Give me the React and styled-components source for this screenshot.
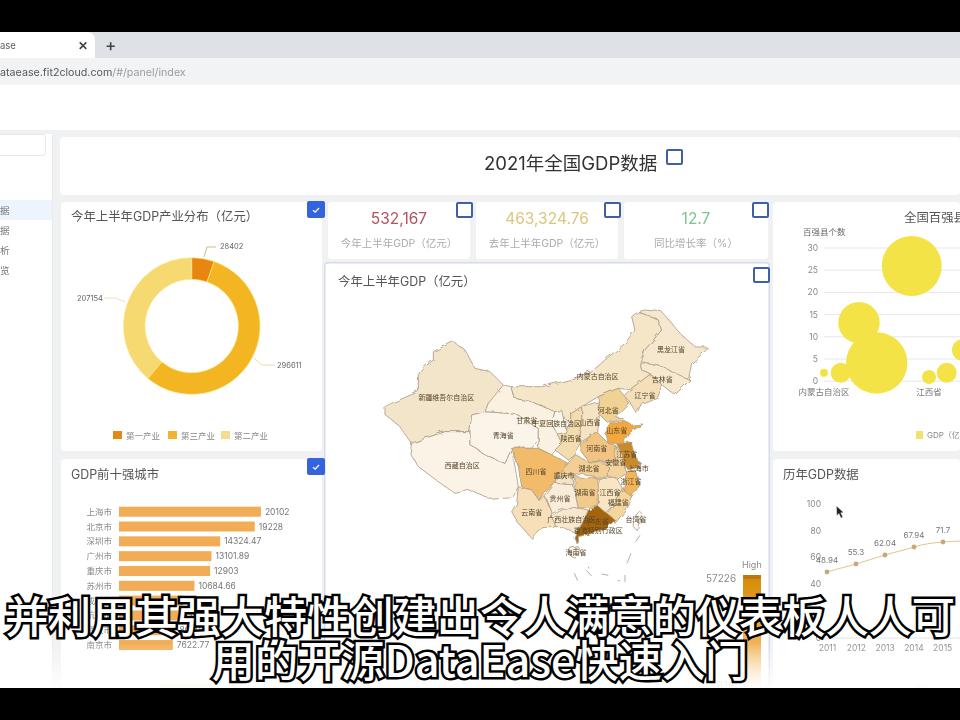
import React from "react";
import styled, { createGlobalStyle } from "styled-components";

const FONT = `"Inter", "Noto Sans CJK SC", "Noto Sans", sans-serif`;

const Global = createGlobalStyle`
  html, body { margin: 0; padding: 0; background: #000; }
  body { font-family: ${FONT}; }
`;

const Stage = styled.div`
  position: relative;
  width: 960px;
  height: 720px;
  overflow: hidden;
  background: #000;
`;
const Blackout = styled.div`
  height: 32px;
  background: #000;
`;
const Screen = styled.div`
  display: flex;
  flex-direction: column;
  height: 656px;
  background: #fff;
  filter: blur(0.45px);
  position: relative;
  overflow: hidden;
`;
const TabBar = styled.div`
  display: flex;
  align-items: center;
  height: 26px;
  background: #dee1e5;
`;
const Tab = styled.div`
  display: flex;
  align-items: center;
  justify-content: space-between;
  width: 95px;
  height: 100%;
  box-sizing: border-box;
  padding-right: 7px;
  background: #fff;
  border-radius: 0 8px 0 0;
  font-size: 9.5px;
  color: #5f6368;
`;
const TabClose = styled.span`
  font-size: 12px;
  font-weight: 600;
  color: #444;
`;
const NewTab = styled.span`
  margin-left: 10px;
  font-size: 17px;
  font-weight: 500;
  color: #444;
`;
const UrlBar = styled.div`
  display: flex;
  align-items: center;
  height: 27px;
  margin-bottom: 1px;
  padding-top: 1px;
  box-sizing: border-box;
  background: #f1f3f4;
  font-size: 10.7px;
  color: #55585c;
  white-space: nowrap;
`;
const UrlTail = styled.span`
  color: #9a9da1;
`;
const WhiteStrip = styled.div`
  height: 44px;
  background: #fff;
`;
const Body = styled.div`
  display: flex;
  height: 558px;
  background: #f0f1f3;
`;
const Sidebar = styled.aside`
  width: 53px;
  flex: none;
  margin-top: 4px;
  background: #fff;
  border-right: 1px solid #e9ebee;
  box-sizing: border-box;
`;
const SearchBox = styled.div`
  width: 50px;
  height: 22px;
  margin: 0 0 44px -4px;
  border: 1px solid #e5e7eb;
  border-radius: 3px;
  box-sizing: border-box;
`;
const NavItem = styled.div`
  display: flex;
  align-items: center;
  height: 20px;
  padding-left: 0;
  font-size: 9.5px;
  color: #777;
  background: ${(p) => (p.$active ? "#edf4fd" : "transparent")};
`;
const Main = styled.main`
  flex: 1;
  min-width: 0;
  padding: 7px 0 0 7px;
  overflow: hidden;
`;
const HeaderCard = styled.header`
  position: relative;
  display: flex;
  align-items: center;
  height: 58px;
  box-sizing: border-box;
  margin: 0 0 7px 0;
  padding: 0 0 8px 424px;
  background: #fff;
  border-radius: 4px;
`;
const PageTitle = styled.h1`
  margin: 0;
  font-size: 18.5px;
  font-weight: 400;
  color: #333;
  white-space: nowrap;
`;
const Grid = styled.div`
  display: grid;
  grid-template-columns: 261px 446px 187px;
  column-gap: 2px;
  margin-left: 1px;
`;
const Column = styled.div`
  display: flex;
  flex-direction: column;
  gap: 8px;
  height: 486px;
`;
const CenterColumn = styled.div`
  display: flex;
  flex-direction: column;
  gap: 3px;
  height: 486px;
`;
const RightColumn = styled(Column)`
  margin-left: 1px;
  width: 187px;
`;
const Card = styled.section`
  position: relative;
  flex: none;
  height: ${(p) => p.$h}px;
  background: #fff;
  border-radius: 4px;
`;
const CardTitle = styled.div`
  height: ${(p) => p.$h || 30}px;
  line-height: ${(p) => p.$lh || 30}px;
  padding-left: ${(p) => p.$pad || 10}px;
  font-size: 12.4px;
  color: #555;
  white-space: nowrap;
`;
const KpiRow = styled.div`
  display: grid;
  grid-template-columns: 142px 142px 144px;
  column-gap: 6px;
  padding-left: 4px;
  height: 57px;
`;
const Kpi = styled.div`
  position: relative;
  display: flex;
  flex-direction: column;
  align-items: center;
  padding-top: 7px;
  background: #fff;
  border-radius: 3px;
`;
const KpiValue = styled.div`
  font-size: 15.5px;
  line-height: 20px;
  color: ${(p) => p.$color};
`;
const KpiLabel = styled.div`
  margin-top: 8px;
  font-size: 10.5px;
  line-height: 14px;
  color: #a9abaf;
  white-space: nowrap;
`;
const MapCard = styled(Card)`
  box-sizing: border-box;
  box-shadow: inset 0 0 0 1.5px #d6daea;
`;
const Check = styled.span`
  position: absolute;
  z-index: 3;
  top: ${(p) => p.$top}px;
  right: ${(p) => p.$right}px;
  left: ${(p) => p.$left};
  box-sizing: border-box;
  display: flex;
  align-items: center;
  justify-content: center;
  width: ${(p) => (p.$on ? 18 : 17)}px;
  height: ${(p) => (p.$on ? 17 : 16)}px;
  border-radius: 2px;
  background: ${(p) => (p.$on ? "#3563de" : "#fff")};
  border: ${(p) => (p.$on ? "none" : "2.5px solid #3f5fa8")};
`;
const Chart = styled.svg`
  display: block;
  overflow: visible;
`;
const T = styled.text`
  font-family: ${FONT};
  font-size: ${(p) => p.$s || 8.5}px;
  fill: ${(p) => p.$c || "#777"};
`;
const Fade = styled.div`
  position: absolute;
  left: 0;
  right: 0;
  bottom: 0;
  height: 46px;
  z-index: 4;
  background: linear-gradient(to bottom, rgba(255,255,255,0), rgba(255,255,255,0.95));
`;
const Subtitle = styled.div`
  position: absolute;
  z-index: 5;
  left: 0;
  right: 0;
  top: 592px;
  text-align: center;
  font-family: "Noto Sans CJK SC", sans-serif;
  font-size: 43.2px;
  line-height: 44px;
  font-weight: 500;
  color: #fff;
  white-space: nowrap;
  -webkit-text-stroke: 5px #000;
  paint-order: stroke fill;
`;
const Line = styled.div``;

const polar = (cx, cy, r, a) => [cx + r * Math.sin(a), cy - r * Math.cos(a)];
const arc = (cx, cy, R, r, a0, a1) => {
  const [x0, y0] = polar(cx, cy, R, a0);
  const [x1, y1] = polar(cx, cy, R, a1);
  const [x2, y2] = polar(cx, cy, r, a1);
  const [x3, y3] = polar(cx, cy, r, a0);
  const big = a1 - a0 > Math.PI ? 1 : 0;
  return `M${x0} ${y0}A${R} ${R} 0 ${big} 1 ${x1} ${y1}L${x2} ${y2}A${r} ${r} 0 ${big} 0 ${x3} ${y3}Z`;
};

const donut = [
  { v: 28402, c: "#e8860f" },
  { v: 296611, c: "#f3b521" },
  { v: 207154, c: "#f6d971" },
];
const legend = [
  { x: 113, c: "#e08a12", t: "第一产业" },
  { x: 168, c: "#eeb62c", t: "第三产业" },
  { x: 221, c: "#f5dd8e", t: "第二产业" },
];

function DonutChart() {
  const total = donut.reduce((s, d) => s + d.v, 0);
  let a = 0;
  return (
    <Chart width="261" height="221" viewBox="61 230 261 221">
      {donut.map((d) => {
        const a0 = a;
        a += (d.v / total) * Math.PI * 2;
        return <path key={d.v} d={arc(191.7, 326, 68.3, 46.7, a0, a)} fill={d.c} stroke="#fbe88a" strokeWidth="0.6" />;
      })}
      <path d="M204 257L207 247H216" fill="none" stroke="#c9a76a" strokeWidth="0.8" />
      <path d="M104 298H115L126 302" fill="none" stroke="#eadca8" strokeWidth="0.8" />
      <path d="M254 358L262 365H275" fill="none" stroke="#e6d28f" strokeWidth="0.8" />
      <T x="220" y="249" $s="7.5" $c="#666">28402</T>
      <T x="77" y="301" $s="7.5" $c="#666">207154</T>
      <T x="277" y="368" $s="7.5" $c="#666">296611</T>
      {legend.map((l) => (
        <g key={l.t}>
          <rect x={l.x} y="431" width="9" height="8" fill={l.c} />
          <T x={l.x + 13} y="438.5" $s="8.5" $c="#888">{l.t}</T>
        </g>
      ))}
    </Chart>
  );
}

const cities = [
  ["上海市", 20102, "20102"],
  ["北京市", 19228, "19228"],
  ["深圳市", 14324.47, "14324.47"],
  ["广州市", 13101.89, "13101.89"],
  ["重庆市", 12903, "12903"],
  ["苏州市", 10684.66, "10684.66"],
  ["成都市", 9102.52, "9102.52"],
  ["杭州市", 8350, "8350"],
  ["武汉市", 8000, "8000"],
  ["南京市", 7622.77, "7622.77"],
];

function BarsChart() {
  return (
    <Chart width="261" height="199" viewBox="61 489 261 199">
      {cities.map(([n, v, s], i) => {
        const y = 511.7 + i * 14.82;
        const w = v * 0.00706;
        return (
          <g key={n}>
            <T x="112" y={y + 3} $s="8.5" $c="#888" textAnchor="end">{n}</T>
            <rect x="119" y={y - 5} width={w} height="10" fill="#f1ac55" />
            <T x={119 + w + 4} y={y + 3} $s="8.5" $c="#777">{s}</T>
          </g>
        );
      })}
      <rect x="160" y="684" width="55" height="4" fill="#f3c98c" opacity="0.7" />
    </Chart>
  );
}

const provinces = [
  ["M30 320L60 305L130 275L130 215L175 180L175 155L235 125L270 150L300 205L345 215L385 255L390 270L340 310L330 335L290 345L285 395L210 395L150 415L110 430L70 375L30 345Z", "#f3e5c9"],
  ["M110 430L150 415L210 395L285 395L285 435L340 470L390 490L410 445L420 500L430 560L415 590L340 595L290 570L240 580L190 545L130 500L105 460Z", "#faf3e6"],
  ["M290 345L330 335L400 340L430 345L490 385L490 420L470 445L410 445L390 490L340 470L285 435L285 395Z", "#fbf4e8"],
  ["M385 255L410 260L420 295L470 305L540 335L530 370L550 405L560 430L530 465L490 445L490 385L430 345L400 340L330 335L340 310Z", "#faf1e0"],
  ["M410 260L500 260L580 240L650 215L690 180L750 130L780 90L770 50L790 35L850 60L860 90L810 150L795 185L800 210L830 225L770 270L730 265L670 290L620 320L590 340L590 370L540 335L470 305L420 295Z", "#f5e6c8"],
  ["M790 35L810 30L860 35L920 105L960 140L1000 145L950 190L940 240L850 195L800 185L810 150L860 90L850 60Z", "#f6e8cf"],
  ["M795 188L850 195L945 240L900 285L860 255L830 225L800 210Z", "#f6e9d0"],
  ["M830 225L860 255L850 290L800 310L785 340L760 300L750 290L770 270Z", "#f4dfb9"],
  ["M670 290L730 265L750 290L760 310L730 340L720 350L745 355L700 370L670 340Z", "#f1d295"],
  ["M620 320L670 305L670 345L665 395L620 425L610 410L620 370Z", "#f5e3c3"],
  ["M590 340L620 320L620 370L610 410L620 430L600 465L580 480L540 450L560 430L550 405L590 370Z", "#f3dcb0"],
  ["M540 335L560 330L575 400L550 405L530 370Z", "#fbf6ec"],
  ["M690 400L710 370L745 360L770 375L805 372L760 400L745 430L700 430Z", "#f3a83c"],
  ["M620 430L665 395L700 430L725 440L715 485L640 485L620 455Z", "#f1c481"],
  ["M725 432L745 430L770 425L785 480L800 490L760 510L750 495L745 470Z", "#c98a2e"],
  ["M715 485L725 440L745 470L750 500L755 520L725 540L700 530L700 490Z", "#f2d39c"],
  ["M785 490L800 495L795 505L780 500Z", "#dca253"],
  ["M755 515L780 510L795 555L770 590L745 570L750 540Z", "#f2b45b"],
  ["M600 465L640 485L700 490L700 530L670 535L620 520L595 530L545 525L575 495Z", "#f2cf95"],
  ["M540 530L595 530L595 555L540 552Z", "#f5e3c3"],
  ["M410 445L470 445L490 445L530 465L580 490L545 525L540 550L510 580L495 605L470 570L440 560L430 500Z", "#f2bb6b"],
  ["M600 530L665 535L670 590L670 620L610 625L600 580Z", "#f1cb8c"],
  ["M670 535L725 535L745 570L720 610L690 640L670 620Z", "#f8e5c4"],
  ["M720 610L745 570L770 590L745 640L720 670L695 640Z", "#f3d59e"],
  ["M640 630L670 620L695 640L720 660L690 690L630 705L610 710L610 735L600 715L625 660Z", "#a4650f"],
  ["M530 650L590 620L640 630L625 665L600 700L560 680L540 680Z", "#f7e7cd"],
  ["M510 590L540 550L595 555L600 580L610 625L590 620L530 640Z", "#f9ecd8"],
  ["M430 560L470 570L495 605L510 590L530 640L530 650L540 680L500 680L470 715L430 670L410 635L425 610Z", "#f6dfb9"],
  ["M585 745L610 740L620 760L600 775L585 765Z", "#fbf3e4"],
  ["M775 650L790 630L800 640L790 695L775 680Z", "#fdfaf4"],
];
const mapLabels = [
  ["黑龙江省", 888, 155], ["吉林省", 862, 245], ["内蒙古自治区", 668, 237], ["辽宁省", 810, 295],
  ["新疆维吾尔自治区", 214, 300], ["甘肃省", 455, 369], ["青海省", 385, 415], ["西藏自治区", 262, 504],
  ["宁夏回族自治区", 545, 379], ["山西省", 645, 375], ["河北省", 700, 339], ["山东省", 725, 400],
  ["陕西省", 588, 422], ["河南省", 665, 454], ["江苏省", 755, 472], ["安徽省", 722, 495],
  ["上海市", 790, 512], ["四川省", 483, 522], ["湖北省", 642, 514], ["重庆市", 567, 534],
  ["浙江省", 768, 552], ["湖南省", 630, 585], ["江西省", 705, 585], ["贵州省", 555, 604],
  ["福建省", 730, 615], ["云南省", 470, 644], ["台湾省", 783, 665], ["广西壮族自治区", 590, 667],
  ["广东省", 670, 672], ["香港特别行政区", 670, 700], ["海南省", 603, 765],
];
const islands = [
  "M795 706L782 725", "M768 760L756 790", "M598 820L608 842", "M635 812L650 828",
  "M680 822L700 826", "M750 825V846", "M735 842H728", "M640 800L642 806",
];

function MapChart() {
  return (
    <Chart width="446" height="396" viewBox="324 292 446 396">
      <defs>
        <linearGradient id="vm" x1="0" y1="0" x2="0" y2="1">
          <stop offset="0" stopColor="#d58a03" />
          <stop offset="0.6" stopColor="#f0b155" />
          <stop offset="1" stopColor="#fbe6bc" />
        </linearGradient>
        <filter id="rough" x="-5%" y="-5%" width="110%" height="110%">
          <feTurbulence type="fractalNoise" baseFrequency="0.035" numOctaves="2" seed="4" result="n" />
          <feDisplacementMap in="SourceGraphic" in2="n" scale="16" />
        </filter>
      </defs>
      <g transform="translate(375 300) scale(0.3333)">
        <g filter="url(#rough)">
          {provinces.map(([d, c], i) => (
            <path key={i} d={d} fill={c} stroke="#ad9f8a" strokeWidth="2.6" strokeLinejoin="round" />
          ))}
        </g>
        {islands.map((d) => (
          <path key={d} d={d} stroke="#9f9f9f" strokeWidth="2.5" fill="none" />
        ))}
        {mapLabels.map(([t, x, y]) => (
          <T key={t} x={x} y={y} $s="21" $c="#54442c" textAnchor="middle">{t}</T>
        ))}
      </g>
      <T x="742" y="568" $s="9" $c="#8a8a8a">High</T>
      <T x="706" y="581.5" $s="10" $c="#8a8a8a">57226</T>
      <rect x="743" y="575" width="18" height="113" fill="url(#vm)" />
      <rect x="743" y="575" width="18" height="4" rx="2" fill="#b9770e" />
      <T x="717" y="688" $s="9" $c="#8a8a8a">936</T>
    </Chart>
  );
}

const bubbles = [
  [911.7, 266, 30], [859, 322.7, 20.7], [876.7, 363, 30.7], [840.7, 372.7, 10],
  [824, 372.7, 4], [929, 377, 7], [946.7, 372.7, 10], [963, 350, 11],
];

function BubbleChart() {
  return (
    <Chart width="187" height="221" viewBox="773 230 187 221">
      <T x="803" y="235" $s="8.5" $c="#666">百强县个数</T>
      {[30, 25, 20, 15, 10, 5, 0].map((v, i) => (
        <g key={v}>
          <line x1="824" x2="960" y1={248 + i * 22.2} y2={248 + i * 22.2} stroke="#dfe1e6" strokeWidth="0.8" />
          <T x="818" y={251 + i * 22.2} $s="8.5" $c="#888" textAnchor="end">{v}</T>
        </g>
      ))}
      {bubbles.map(([x, y, r]) => (
        <circle key={x} cx={x} cy={y} r={r} fill="#f3e347" />
      ))}
      <T x="824" y="395" $s="8.5" $c="#777" textAnchor="middle">内蒙古自治区</T>
      <T x="929" y="395" $s="8.5" $c="#777" textAnchor="middle">江西省</T>
      <rect x="916" y="431" width="7" height="8" fill="#eee36c" />
      <T x="927" y="438" $s="8" $c="#888">GDP（亿元）</T>
    </Chart>
  );
}

const history = [
  [827, 572, "48.94"], [856, 564, "55.3"], [885, 555, "62.04"], [914, 547, "67.94"], [943, 542, "71.7"], [972, 541, ""],
];
const axisY = [[100, 504], [80, 531], [60, 557], [40, 584], [20, 611], [0, 638]];

function LineChart() {
  return (
    <Chart width="187" height="199" viewBox="773 489 187 199">
      {axisY.map(([v, y]) => (
        <T key={v} x="821" y={y + 3} $s="8.5" $c="#888" textAnchor="end">{v}</T>
      ))}
      <line x1="824" x2="960" y1="638" y2="638" stroke="#dcdcdc" strokeWidth="0.8" />
      <path d="M827 572C840 568 846 567 856 564S875 558 885 555S905 550 914 547S932 543 943 542S965 541 972 541" fill="none" stroke="#e3c48d" strokeWidth="1" />
      {history.map(([x, y, t]) => (
        <g key={x}>
          <circle cx={x} cy={y} r="2.4" fill="#c9a878" />
          <T x={x} y={y - 9} $s="8" $c="#777" textAnchor="middle">{t}</T>
        </g>
      ))}
      {[2011, 2012, 2013, 2014, 2015].map((y, i) => (
        <T key={y} x={827.5 + i * 28.8} y="651" $s="8.5" $c="#888" textAnchor="middle">{y}</T>
      ))}
      <path d="M836.5 506L836.8 515.5L839 513.5L841 518L842.8 517L840.7 512.8L843.5 512.5Z" fill="#222" stroke="#fff" strokeWidth="0.3" />
      <rect x="915" y="685" width="12" height="3" fill="#f3c98c" opacity="0.7" />
    </Chart>
  );
}

const CheckMark = () => (
  <svg width="10" height="10" viewBox="0 0 10 10">
    <path d="M2 5.2L4.2 7.2L8 3" fill="none" stroke="#fff" strokeWidth="1.3" />
  </svg>
);

export default function App() {
  return (
    <Stage>
      <Global />
      <Blackout />
      <Screen>
        <TabBar>
          <Tab>
            <span>ase</span>
            <TabClose>✕</TabClose>
          </Tab>
          <NewTab>+</NewTab>
        </TabBar>
        <UrlBar>
          <span>ataease.fit2cloud.com</span>
          <UrlTail>/#/panel/index</UrlTail>
        </UrlBar>
        <WhiteStrip />
        <Body>
          <Sidebar>
            <SearchBox />
            <NavItem $active>据</NavItem>
            <NavItem>据</NavItem>
            <NavItem>析</NavItem>
            <NavItem>览</NavItem>
          </Sidebar>
          <Main>
            <HeaderCard>
              <PageTitle>2021年全国GDP数据</PageTitle>
              <Check $top={12} $left="606px" />
            </HeaderCard>
            <Grid>
              <Column>
                <Card $h={249}>
                  <CardTitle $h={28} $lh={30}>今年上半年GDP产业分布（亿元）</CardTitle>
                  <Check $on $top={-1} $right={-3}><CheckMark /></Check>
                  <DonutChart />
                </Card>
                <Card $h={229}>
                  <CardTitle $lh={31}>GDP前十强城市</CardTitle>
                  <Check $on $top={-1} $right={-3}><CheckMark /></Check>
                  <BarsChart />
                </Card>
              </Column>
              <CenterColumn>
                <KpiRow>
                  <Kpi>
                    <KpiValue $color="#b4525f">532,167</KpiValue>
                    <KpiLabel>今年上半年GDP（亿元）</KpiLabel>
                    <Check $top={0} $right={-3} />
                  </Kpi>
                  <Kpi>
                    <KpiValue $color="#dcc67f">463,324.76</KpiValue>
                    <KpiLabel>去年上半年GDP（亿元）</KpiLabel>
                    <Check $top={0} $right={-3} />
                  </Kpi>
                  <Kpi>
                    <KpiValue $color="#7cc58c">12.7</KpiValue>
                    <KpiLabel>同比增长率（%）</KpiLabel>
                    <Check $top={0} $right={-1} />
                  </Kpi>
                </KpiRow>
                <MapCard $h={426}>
                  <CardTitle $pad={14} $lh={40}>今年上半年GDP（亿元）</CardTitle>
                  <Check $top={5} $right={0} />
                  <MapChart />
                </MapCard>
              </CenterColumn>
              <RightColumn>
                <Card $h={249}>
                  <CardTitle $h={28} $lh={31} $pad={131}>全国百强县GDP数据</CardTitle>
                  <BubbleChart />
                </Card>
                <Card $h={229}>
                  <CardTitle $lh={31}>历年GDP数据</CardTitle>
                  <LineChart />
                </Card>
              </RightColumn>
            </Grid>
          </Main>
        </Body>
        <Fade />
      </Screen>
      <Blackout />
      <Subtitle>
        <Line>并利用其强大特性创建出令人满意的仪表板人人可</Line>
        <Line>用的开源DataEase快速入门</Line>
      </Subtitle>
    </Stage>
  );
}
